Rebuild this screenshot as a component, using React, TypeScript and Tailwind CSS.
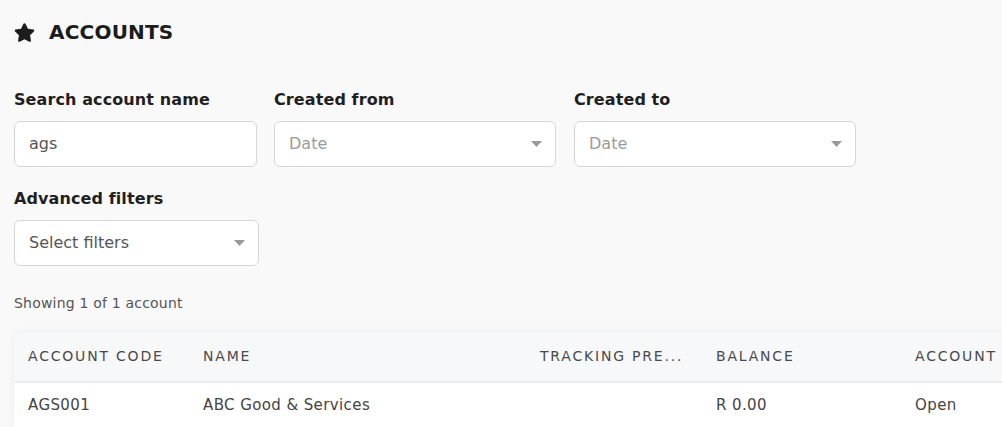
import React from "react";
import { FaStar } from "react-icons/fa";

const Caret = () => (
  <svg width="11" height="6" viewBox="0 0 11 6" className="shrink-0">
    <path d="M0 0 L11 0 L5.5 6 Z" fill="#9a9a9a" />
  </svg>
);

const Field: React.FC<{ label: string; width: string; children: React.ReactNode }> = ({
  label,
  width,
  children,
}) => (
  <div className={`flex flex-col ${width}`}>
    <label className="text-[16px] font-semibold text-[#1f1f1f] leading-5 mb-[11px] tracking-[0.1px]">
      {label}
    </label>
    {children}
  </div>
);

const Box: React.FC<{ text: string; muted?: boolean; caret?: boolean; className: string }> = ({
  text,
  muted,
  caret,
  className,
}) => (
  <div
    className={`h-[46px] bg-white border border-[#d6d6d6] rounded-[6px] flex items-center justify-between pl-[14px] pr-[13px] ${className}`}
  >
    <span className={`text-[16px] ${muted ? "text-[#9b9b9b]" : "text-[#555]"}`}>{text}</span>
    {caret && <Caret />}
  </div>
);

const columns = [
  { key: "code", label: "ACCOUNT CODE", w: "w-[175px]" },
  { key: "name", label: "NAME", w: "w-[337px]" },
  { key: "tracking", label: "TRACKING PRE...", w: "w-[176px]" },
  { key: "balance", label: "BALANCE", w: "w-[199px]" },
  { key: "status", label: "ACCOUNT", w: "w-[200px]" },
];

const rows = [
  { code: "AGS001", name: "ABC Good & Services", tracking: "", balance: "R 0.00", status: "Open" },
];

export default function App() {
  return (
    <div
      className="w-[1002px] h-[427px] overflow-hidden bg-[#f9f9f9] pl-[14px] pt-[22px]"
      style={{ fontFamily: '"DejaVu Sans", sans-serif' }}
    >
      {/* 見出し */}
      <div className="flex items-center gap-[14px] h-[20px]">
        <FaStar className="text-[#1c1c1c] w-[21px] h-[21px]" />
        <h1 className="text-[20px] font-semibold text-[#1c1c1c] tracking-[0.2px]">ACCOUNTS</h1>
      </div>

      {/* フィルター */}
      <div className="flex mt-[48px]">
        <Field label="Search account name" width="w-[260px]">
          <Box text="ags" className="w-[243px]" />
        </Field>
        <Field label="Created from" width="w-[300px]">
          <Box text="Date" muted caret className="w-[282px]" />
        </Field>
        <Field label="Created to" width="w-[300px]">
          <Box text="Date" muted caret className="w-[282px]" />
        </Field>
      </div>

      <div className="mt-[22px]">
        <Field label="Advanced filters" width="w-[260px]">
          <Box text="Select filters" caret className="w-[245px] text-[#666]" />
        </Field>
      </div>

      <p className="mt-[27px] text-[14px] text-[#555] leading-5 tracking-[0.2px]">Showing 1 of 1 account</p>

      {/* テーブル */}
      <div className="mt-[19px] w-[1100px] bg-white rounded-tl-[8px] shadow-[0_0_8px_rgba(0,0,0,0.06)] overflow-hidden">
        <div className="flex h-[51px] items-center bg-[#f7f8fa] border-b-2 border-[#ececec]">
          {columns.map((c) => (
            <div key={c.key} className={`${c.w} pl-[14px] text-[14px] text-[#4a4a4a] tracking-[1.8px]`}>
              {c.label}
            </div>
          ))}
        </div>
        {rows.map((r) => (
          <div key={r.code} className="flex h-[44px] items-center">
            {columns.map((c) => (
              <div key={c.key} className={`${c.w} pl-[14px] text-[15px] text-[#444] tracking-[0.4px]`}>
                {r[c.key as keyof typeof r]}
              </div>
            ))}
          </div>
        ))}
      </div>
    </div>
  );
}
